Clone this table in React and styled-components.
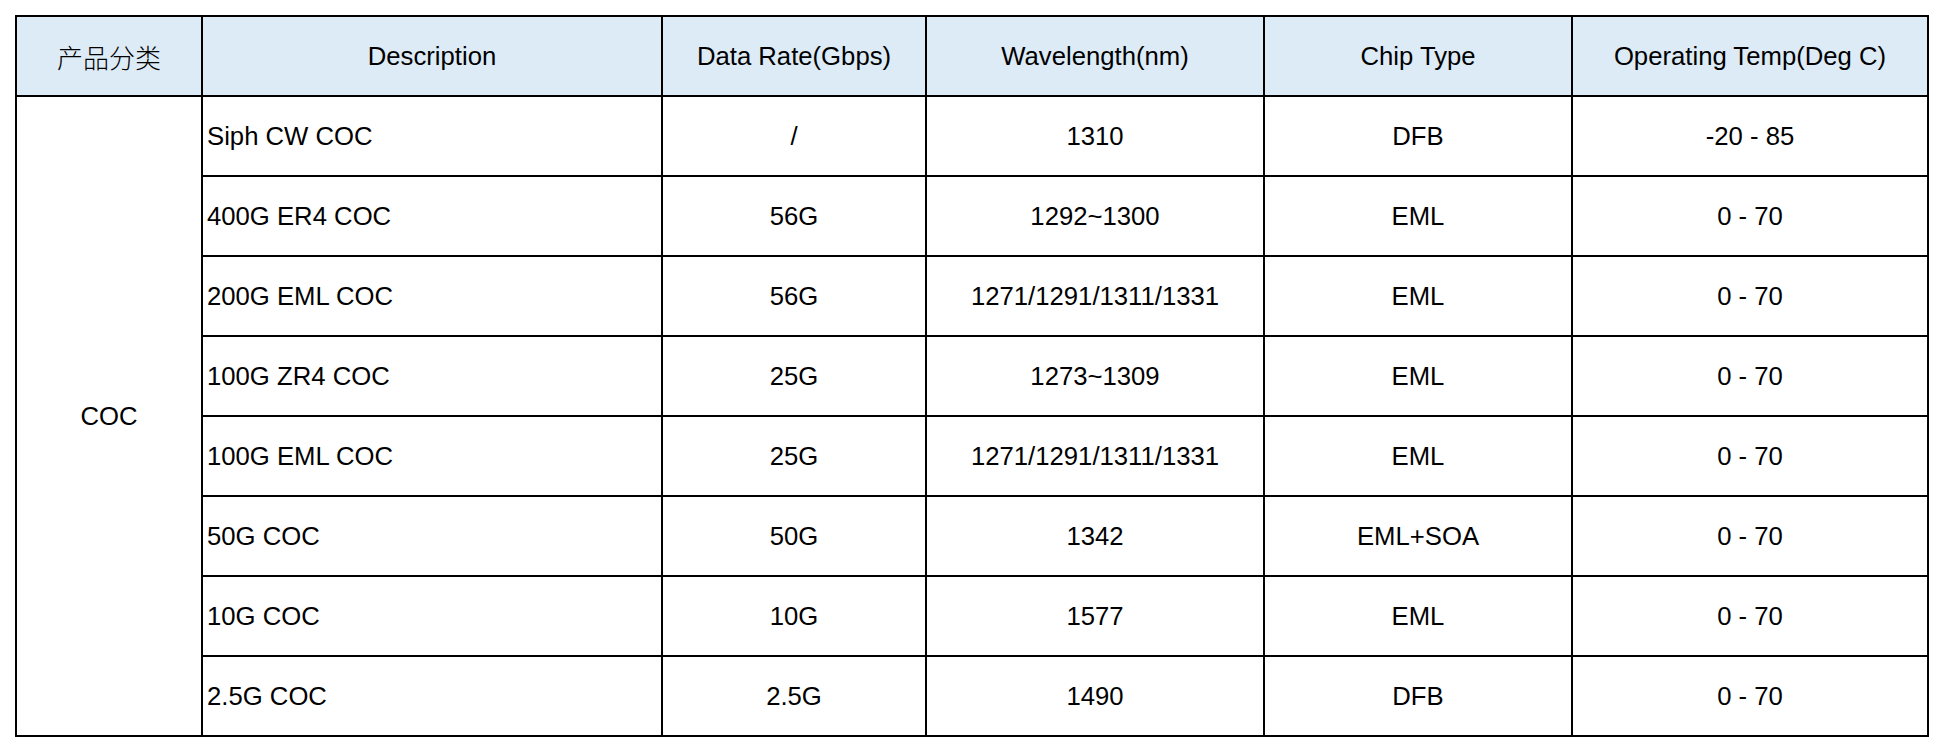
import React from 'react';
import styled, { createGlobalStyle } from 'styled-components';

const GlobalStyle = createGlobalStyle`
  html, body {
    margin: 0;
    padding: 0;
    background: #ffffff;
  }
  body {
    font-family: 'Liberation Sans', Arial, 'Noto Sans CJK SC', sans-serif;
    color: #000000;
  }
`;

const Page = styled.div`
  padding: 15px;
  width: 1944px;
  height: 752px;
  box-sizing: border-box;
`;

// black grid background + 2px gaps draw the cell borders
const Table = styled.div`
  display: grid;
  grid-template-columns: 184px 458px 262px 336px 306px 354px;
  grid-auto-rows: 78px;
  gap: 2px;
  padding: 2px;
  background: #000000;
  width: max-content;
`;

const Cell = styled.div`
  display: flex;
  align-items: center;
  justify-content: ${(p) => (p.left ? 'flex-start' : 'center')};
  padding-left: ${(p) => (p.left ? '4px' : '0')};
  padding-top: 2px;
  box-sizing: border-box;
  background: ${(p) => (p.head ? '#ddebf7' : '#ffffff')};
  font-size: 25.7px;
  line-height: 1;
  white-space: nowrap;
  grid-row: ${(p) => (p.span ? `span ${p.span}` : 'auto')};
`;

const CjkText = styled.span`
  font-family: 'Noto Sans CJK SC', sans-serif;
  font-weight: 300;
  font-size: 26px;
`;

const headers = [
  'Description',
  'Data Rate(Gbps)',
  'Wavelength(nm)',
  'Chip Type',
  'Operating Temp(Deg C)',
];

const rows = [
  ['Siph CW COC', '/', '1310', 'DFB', '-20 - 85'],
  ['400G ER4 COC', '56G', '1292~1300', 'EML', '0 - 70'],
  ['200G EML COC', '56G', '1271/1291/1311/1331', 'EML', '0 - 70'],
  ['100G ZR4 COC', '25G', '1273~1309', 'EML', '0 - 70'],
  ['100G EML COC', '25G', '1271/1291/1311/1331', 'EML', '0 - 70'],
  ['50G COC', '50G', '1342', 'EML+SOA', '0 - 70'],
  ['10G COC', '10G', '1577', 'EML', '0 - 70'],
  ['2.5G COC', '2.5G', '1490', 'DFB', '0 - 70'],
];

const App = () => {
  return (
    <Page>
      <GlobalStyle />
      <Table>
        <Cell head>
          <CjkText>产品分类</CjkText>
        </Cell>
        {headers.map((h) => (
          <Cell head key={h}>
            {h}
          </Cell>
        ))}

        {rows.map((r, i) => (
          <React.Fragment key={r[0]}>
            {i === 0 && <Cell span={rows.length}>COC</Cell>}
            {r.map((v, j) => (
              <Cell key={j} left={j === 0}>
                {v}
              </Cell>
            ))}
          </React.Fragment>
        ))}
      </Table>
    </Page>
  );
};

export default App;
